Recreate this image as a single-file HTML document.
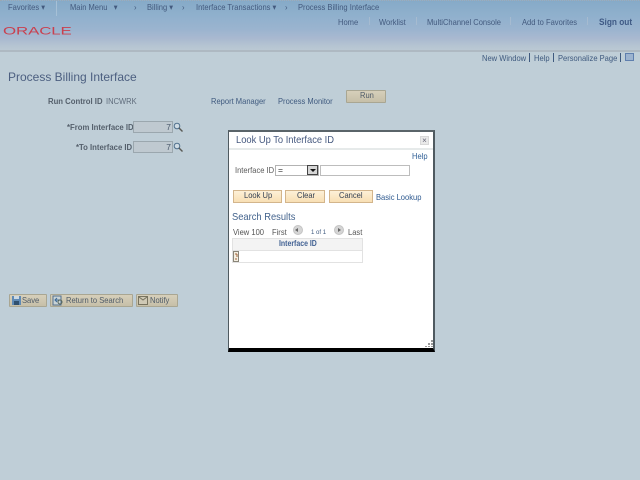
<!DOCTYPE html>
<html>
<head>
<meta charset="utf-8">
<style>
html,body{margin:0;padding:0;width:640px;height:480px;overflow:hidden;background:#bfced7;}
body{position:relative;font-family:"Liberation Sans",Arial,sans-serif;font-size:8.5px;color:#4a5a75;filter:blur(.25px);}
.t{position:absolute;white-space:nowrap;line-height:10px;transform:scaleX(.89);transform-origin:0 50%;}
.b{position:absolute;box-sizing:border-box;}
.hl{color:#435a7e;}
.btn{position:absolute;box-sizing:border-box;background:linear-gradient(#d6cfba,#c6bfa8);border:1px solid #a9a692;border-radius:1px;height:13px;}
.dbtn{position:absolute;box-sizing:border-box;height:13px;top:190px;background:linear-gradient(#fdf0d8,#f8dfb4);border:1px solid #d3b58c;}
.inp{position:absolute;box-sizing:border-box;background:#bfc9d0;border:1px solid #9ba7ae;height:12px;width:40px;left:133px;text-align:right;padding-right:1px;line-height:10px;color:#4a5a6c;}
</style>
</head>
<body>
<!-- header -->
<div class="b" style="left:0;top:0;width:640px;height:15px;background:linear-gradient(#86aac8,#8fb0cc);border-top:1px dotted #9aa7b3;"></div>
<div class="b" style="left:0;top:15px;width:640px;height:36px;background:linear-gradient(#8fb0cd 0%,#9bb4cf 40%,#a9b9d0 65%,#b5c4d2 85%,#bccad4 100%);"></div>
<div class="b" style="left:0;top:50px;width:640px;height:2px;background:#aeb9c2;"></div>
<div class="b" style="left:56px;top:1px;width:1px;height:15px;background:#a6c0d6;"></div>

<div class="t hl" style="left:8px;top:2px;">Favorites ▾</div>
<div class="t hl" style="left:70px;top:2px;">Main Menu &nbsp;&nbsp;▾</div>
<div class="t hl" style="left:134px;top:2px;">›</div>
<div class="t hl" style="left:147px;top:2px;">Billing ▾</div>
<div class="t hl" style="left:182px;top:2px;">›</div>
<div class="t hl" style="left:196px;top:2px;">Interface Transactions ▾</div>
<div class="t hl" style="left:285px;top:2px;">›</div>
<div class="t hl" style="left:298px;top:2px;">Process Billing Interface</div>

<div class="t" style="left:3px;top:24px;font-size:13.5px;line-height:14px;color:#c9404f;letter-spacing:-.1px;transform:scale(1.25,.85);">ORACLE</div>

<div class="t hl" style="left:338px;top:17px;">Home</div>
<div class="t hl" style="left:379px;top:17px;">Worklist</div>
<div class="t hl" style="left:427px;top:17px;">MultiChannel Console</div>
<div class="t hl" style="left:522px;top:17px;">Add to Favorites</div>
<div class="t" style="left:599px;top:17px;font-size:9.3px;font-weight:bold;color:#3f5a85;">Sign out</div>
<div class="b" style="left:369px;top:17px;width:1px;height:8px;background:#a6bbd0;"></div>
<div class="b" style="left:416px;top:17px;width:1px;height:8px;background:#a6bbd0;"></div>
<div class="b" style="left:510px;top:17px;width:1px;height:8px;background:#a6bbd0;"></div>
<div class="b" style="left:587px;top:17px;width:1px;height:8px;background:#a6bbd0;"></div>

<!-- page links -->
<div class="t" style="left:482px;top:53px;color:#3f5a7f;">New Window</div>
<div class="b" style="left:529px;top:53px;width:1px;height:9px;background:#3f5a7f;"></div>
<div class="t" style="left:534px;top:53px;color:#3f5a7f;">Help</div>
<div class="b" style="left:553px;top:53px;width:1px;height:9px;background:#3f5a7f;"></div>
<div class="t" style="left:558px;top:53px;color:#3f5a7f;">Personalize Page</div>
<div class="b" style="left:620px;top:53px;width:1px;height:9px;background:#3f5a7f;"></div>
<div class="b" style="left:625px;top:53px;width:9px;height:8px;background:#9cb3cf;border:1px solid #5f7fae;"></div>

<!-- page content -->
<div class="t" style="left:8px;top:70px;font-size:12px;line-height:14px;color:#4c5f80;transform:none;">Process Billing Interface</div>
<div class="t" style="left:48px;top:96px;font-weight:bold;color:#55606c;font-size:8.7px;">Run Control ID</div>
<div class="t" style="left:106px;top:96px;color:#5f6c7c;">INCWRK</div>
<div class="t" style="left:211px;top:96px;color:#3f5a7f;">Report Manager</div>
<div class="t" style="left:278px;top:96px;color:#3f5a7f;">Process Monitor</div>
<div class="btn" style="left:346px;top:90px;width:40px;"></div>
<div class="t" style="left:360px;top:90px;color:#4f5b68;">Run</div>

<div class="t" style="left:67px;top:122px;font-weight:bold;color:#55606c;font-size:8.7px;">*From Interface ID</div>
<div class="inp" style="top:121px;">7</div>
<svg class="b" style="left:173px;top:122px;" width="10" height="10" viewBox="0 0 10 10"><circle cx="4" cy="4" r="2.8" fill="#cfdbe3" stroke="#4f6f8c" stroke-width="1"/><path d="M6 6L9.5 9.5" stroke="#5a5a55" stroke-width="1.4"/></svg>
<div class="t" style="left:76px;top:142px;font-weight:bold;color:#55606c;font-size:8.7px;">*To Interface ID</div>
<div class="inp" style="top:141px;">7</div>
<svg class="b" style="left:173px;top:142px;" width="10" height="10" viewBox="0 0 10 10"><circle cx="4" cy="4" r="2.8" fill="#cfdbe3" stroke="#4f6f8c" stroke-width="1"/><path d="M6 6L9.5 9.5" stroke="#5a5a55" stroke-width="1.4"/></svg>

<!-- bottom toolbar -->
<div class="btn" style="left:9px;top:294px;width:38px;"></div>
<div class="t" style="left:22px;top:295px;color:#4f5b68;">Save</div>
<svg class="b" style="left:12px;top:296px;" width="9" height="9" viewBox="0 0 9 9"><rect width="9" height="9" fill="#5f8ab5"/><rect x="2" y="0" width="5" height="3" fill="#cdd9e2"/><rect x="2" y="5" width="5" height="4" fill="#30506f"/></svg>
<div class="btn" style="left:50px;top:294px;width:83px;"></div>
<div class="t" style="left:66px;top:295px;color:#4f5b68;">Return to Search</div>
<svg class="b" style="left:52px;top:295px;" width="11" height="11" viewBox="0 0 11 11"><rect x="1" y="1" width="8" height="9" fill="#c9d3d6" stroke="#54708f"/><path d="M3 5h5M5 3L3 5l2 2" stroke="#3d6a98" fill="none"/><circle cx="8" cy="7" r="2" fill="none" stroke="#55655a"/></svg>
<div class="btn" style="left:136px;top:294px;width:42px;"></div>
<div class="t" style="left:150px;top:295px;color:#4f5b68;">Notify</div>
<svg class="b" style="left:138px;top:296px;" width="10" height="9" viewBox="0 0 10 9"><rect x=".5" y=".5" width="9" height="8" fill="#cfc9b5" stroke="#77735f"/><path d="M1 1l4 3 4-3" fill="none" stroke="#77735f"/></svg>

<!-- dialog -->
<div class="b" style="left:228px;top:130px;width:207px;height:222px;background:#fff;border:2px solid #4f5a60;border-bottom:4px solid #000;border-top-color:#5a6469;border-left-width:1px;"></div>
<div class="b" style="left:229px;top:148px;width:204px;height:2px;background:#e6eaea;"></div>
<div class="t" style="left:236px;top:134px;font-size:10.5px;line-height:12px;color:#46597f;">Look Up To Interface ID</div>
<div class="b" style="left:420px;top:136px;width:9px;height:9px;background:#e9e9e9;border:1px solid #d8d8d8;color:#667;font-size:8px;line-height:7px;text-align:center;">×</div>
<div class="t" style="left:412px;top:151px;color:#2f5f96;">Help</div>
<div class="t" style="left:235px;top:165px;color:#5a5a5a;">Interface ID</div>
<div class="b" style="left:275px;top:165px;width:44px;height:11px;border:1px solid #b3b3b3;background:#fff;color:#333;line-height:9px;padding-left:2px;">=</div>
<div class="b" style="left:307px;top:165px;width:11px;height:10px;background:#d6d6d6;border:1px solid #444;"></div>
<div class="b" style="left:310px;top:169px;width:0;height:0;border-left:3px solid transparent;border-right:3px solid transparent;border-top:3px solid #111;"></div>
<div class="b" style="left:320px;top:165px;width:90px;height:11px;border:1px solid #bdbdbd;background:#fff;"></div>

<div class="dbtn" style="left:233px;width:49px;"></div>
<div class="t" style="left:244px;top:190px;color:#333f52;">Look Up</div>
<div class="dbtn" style="left:285px;width:40px;"></div>
<div class="t" style="left:297px;top:190px;color:#333f52;">Clear</div>
<div class="dbtn" style="left:329px;width:44px;"></div>
<div class="t" style="left:339px;top:190px;color:#333f52;">Cancel</div>
<div class="t" style="left:376px;top:192px;color:#2f5a90;">Basic Lookup</div>

<div class="t" style="left:232px;top:211px;font-size:10.5px;line-height:12px;color:#42628c;">Search Results</div>
<div class="t" style="left:233px;top:227px;color:#555;">View 100</div>
<div class="t" style="left:272px;top:227px;color:#555;">First</div>
<div class="b" style="left:293px;top:225px;width:10px;height:10px;border-radius:50%;background:#d5d5d5;border:1px solid #c4c4c4;"></div>
<div class="b" style="left:295px;top:228px;width:0;height:0;border-top:2px solid transparent;border-bottom:2px solid transparent;border-right:3px solid #666;"></div>
<div class="t" style="left:311px;top:228px;font-size:6.8px;color:#3f5a7f;">1 of 1</div>
<div class="b" style="left:334px;top:225px;width:10px;height:10px;border-radius:50%;background:#d5d5d5;border:1px solid #c4c4c4;"></div>
<div class="b" style="left:338px;top:228px;width:0;height:0;border-top:2px solid transparent;border-bottom:2px solid transparent;border-left:3px solid #666;"></div>
<div class="t" style="left:348px;top:227px;color:#555;">Last</div>

<div class="b" style="left:232px;top:238px;width:131px;height:13px;background:#f3f3f3;border:1px solid #e2e2e2;"></div>
<div class="t" style="left:279px;top:239px;font-size:7.8px;font-weight:bold;color:#3f5f92;">Interface ID</div>
<div class="b" style="left:232px;top:251px;width:131px;height:12px;background:#fff;border:1px solid #e2e2e2;border-top:none;"></div>
<svg class="b" style="left:233px;top:251px;" width="6" height="11" viewBox="0 0 6 11"><rect x=".5" y=".5" width="5" height="10" fill="#f4efe2" stroke="#8a8578"/><path d="M2 3h2M4 3v3M2 8h2" stroke="#a2643c"/></svg>

<!-- resize grip -->
<div class="b" style="left:431px;top:340px;width:2px;height:2px;background:#999;"></div>
<div class="b" style="left:428px;top:343px;width:2px;height:2px;background:#999;"></div>
<div class="b" style="left:431px;top:343px;width:2px;height:2px;background:#999;"></div>
<div class="b" style="left:425px;top:346px;width:2px;height:1px;background:#999;"></div>
<div class="b" style="left:428px;top:346px;width:2px;height:1px;background:#999;"></div>
<div class="b" style="left:431px;top:346px;width:2px;height:1px;background:#999;"></div>
</body>
</html>
